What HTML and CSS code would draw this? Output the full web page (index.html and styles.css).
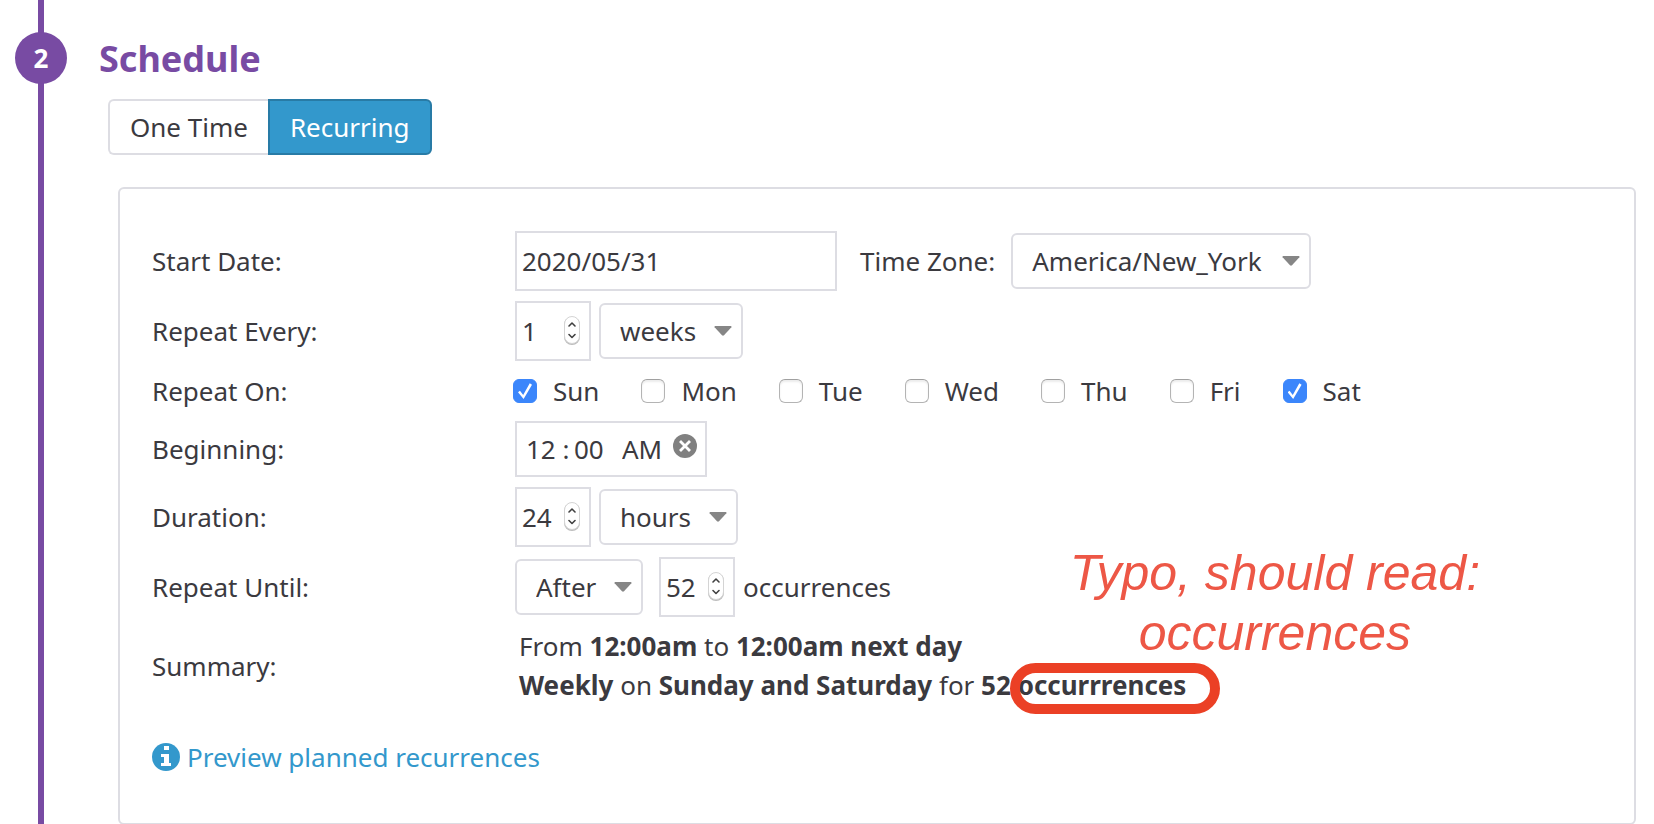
FILE: index.html
```html
<!DOCTYPE html>
<html lang="en">
<head>
<meta charset="utf-8">
<title>Schedule</title>
<meta name="viewport" content="width=device-width, initial-scale=1">
<link rel="stylesheet" href="styles.css">
</head>
<body>
<svg class="symbols" aria-hidden="true">
  <symbol id="arrow" viewBox="0 0 18 10"><path d="M1.2 0h15.6q1 .2.6 1.200L10 9.300q-1 .9-2 0L.6 1.200Q.2.2 1.200 0z" fill="#868686"/></symbol>
  <symbol id="stepper" viewBox="0 0 18 32">
    <rect x="1" y="2" width="16" height="28" rx="8" fill="#bdbdbd"/>
    <rect x="1.500" y="1.500" width="15" height="27" rx="7.500" fill="#fff" stroke="#d4d4d4"/>
    <path d="M6 11 9 8l3 3M6 19.500 9 22.500l3-3" fill="none" stroke="#404040" stroke-width="1.600" stroke-linecap="round" stroke-linejoin="round"/>
  </symbol>
</svg>
<main class="step">
  <div class="rail"><span class="step-number">2</span></div>
  <section class="content">
    <h2 class="title">Schedule</h2>
    <div class="toggle" role="group" aria-label="Schedule type">
      <button type="button" class="toggle-button">One Time</button>
      <button type="button" class="toggle-button active" aria-pressed="true">Recurring</button>
    </div>
    <form class="panel">
      <div class="row">
        <label class="name" for="start">Start Date:</label>
        <div class="field">
          <input class="box date" id="start" type="text" value="2020/05/31">
          <label class="zone" for="zone">Time Zone:</label>
          <span class="select"><select class="zone-list" id="zone"><option>America/New_York</option></select><svg class="arrow"><use href="#arrow"/></svg></span>
        </div>
      </div>
      <div class="row">
        <label class="name" for="every">Repeat Every:</label>
        <div class="field">
          <span class="number"><input class="box" id="every" type="number" value="1"><svg class="stepper"><use href="#stepper"/></svg></span>
          <span class="select"><select aria-label="Repeat unit"><option>weeks</option></select><svg class="arrow"><use href="#arrow"/></svg></span>
        </div>
      </div>
      <div class="row">
        <span class="name" id="days">Repeat On:</span>
        <div class="days" role="group" aria-labelledby="days">
          <label class="day"><input type="checkbox" checked>Sun</label>
          <label class="day"><input type="checkbox">Mon</label>
          <label class="day"><input type="checkbox">Tue</label>
          <label class="day"><input type="checkbox">Wed</label>
          <label class="day"><input type="checkbox">Thu</label>
          <label class="day"><input type="checkbox">Fri</label>
          <label class="day"><input type="checkbox" checked>Sat</label>
        </div>
      </div>
      <div class="row">
        <label class="name" for="hour">Beginning:</label>
        <div class="field">
          <div class="time">
            <input class="time-part" id="hour" type="text" value="12"><span class="colon">:</span><input class="time-part" type="text" value="00" aria-label="Minutes"><input class="time-part meridiem" type="text" value="AM" aria-label="AM or PM">
            <button type="button" class="clear" aria-label="Clear time"><svg viewBox="0 0 24 24"><circle cx="12" cy="12" r="12" fill="#808080"/><path d="M8 8l8 8M16 8l-8 8" stroke="#fff" stroke-width="2.800" stroke-linecap="square"/></svg></button>
          </div>
        </div>
      </div>
      <div class="row">
        <label class="name" for="duration">Duration:</label>
        <div class="field">
          <span class="number"><input class="box" id="duration" type="number" value="24"><svg class="stepper"><use href="#stepper"/></svg></span>
          <span class="select"><select aria-label="Duration unit"><option>hours</option></select><svg class="arrow"><use href="#arrow"/></svg></span>
        </div>
      </div>
      <div class="row">
        <label class="name" for="until">Repeat Until:</label>
        <div class="field">
          <span class="select until"><select id="until"><option>After</option></select><svg class="arrow"><use href="#arrow"/></svg></span>
          <span class="number"><input class="box" id="count" type="number" value="52"><svg class="stepper"><use href="#stepper"/></svg></span>
          <label for="count">occurrences</label>
        </div>
      </div>
      <div class="row">
        <span class="name">Summary:</span>
        <div class="summary">
          <div>From <b>12:00am</b> to <b>12:00am next day</b></div>
          <div><b>Weekly</b> on <b>Sunday and Saturday</b> for <b>52 <span class="marked">occurrrences<span class="ring"></span><span class="note">Typo, should read:<br>occurrences</span></span></b></div>
        </div>
      </div>
      <a class="preview" href="#"><svg class="info" viewBox="0 0 28 28"><circle cx="14" cy="14" r="14" fill="#3398cc"/><path d="M12 3h5v4h-5zM9 11h8v9h2v3H9v-3h3v-6H9z" fill="#fff"/></svg>Preview planned recurrences</a>
    </form>
  </section>
</main>
</body>
</html>
```
FILE: styles.css
```css
* { box-sizing: border-box; }
body {
  margin: 0;
  background: #fff;
  color: #3b3a3f;
  font: 26px/40px "Noto Sans", "Open Sans", sans-serif;
}
input, select, button { font: inherit; color: inherit; margin: 0; }
.symbols { position: absolute; width: 0; height: 0; }
.step { display: flex; min-height: 100vh; }
.rail {
  flex: none;
  width: 52px;
  margin-left: 15px;
  padding-top: 32px;
  background: linear-gradient(#784ba3, #784ba3) center / 6px 100% no-repeat;
}
.step-number {
  display: block;
  border-radius: 50%;
  background: #784ba3;
  color: #fff;
  font-weight: 700;
  line-height: 52px;
  text-align: center;
}
.content { flex: 1; min-width: 0; padding: 33px 18px 0 32px; }
.title { margin: 0 0 14px; color: #784ba3; font-size: 36px; line-height: 52px; font-weight: 700; }
.toggle { display: flex; margin-left: 9px; }
.toggle-button {
  height: 56px;
  padding: 0 20px;
  border: 2px solid #dddde3;
  border-right: 0;
  border-radius: 6px 0 0 6px;
  background: #fff;
}
.toggle-button.active { border: 2px solid #287ba6; border-radius: 0 6px 6px 0; background: #3398cc; color: #fff; }
.panel {
  display: flex;
  flex-direction: column;
  gap: 10px;
  margin: 32px 0 0 19px;
  padding: 42px 32px 46px;
  border: 2px solid #dddde3;
  border-radius: 6px;
}
.row { display: flex; align-items: center; }
.name { flex: none; width: 363px; }
.field { display: flex; align-items: center; gap: 8px; }
.box {
  height: 60px;
  padding: 0 5px;
  border: 2px solid #dddde3;
  border-radius: 0;
  background: #fff;
}
.date { width: 322px; }
.zone { margin: 0 8px 0 15px; }
.number, .select { position: relative; display: flex; }
.number .box { width: 76px; appearance: textfield; }
.number .box::-webkit-inner-spin-button { display: none; }
.stepper { position: absolute; right: 10px; top: 14px; width: 18px; height: 32px; pointer-events: none; }
.select select {
  appearance: none;
  height: 56px;
  padding: 0 44px 0 19px;
  border: 2px solid #dddde3;
  border-radius: 6px;
  background: #fff;
}
.select .zone-list { min-width: 300px; }
.arrow { position: absolute; right: 11px; top: 23px; width: 18px; height: 10px; pointer-events: none; }
.until { margin-right: 8px; }
.days { display: flex; gap: 42px; margin-left: -2px; }
.day { display: flex; align-items: center; gap: 16px; }
.day input {
  appearance: none;
  display: grid;
  place-items: center;
  width: 24px;
  height: 24px;
  border: 1px solid #b4b4b4;
  border-top-color: #a0a0a0;
  border-radius: 6px;
  background: #fff;
  box-shadow: inset 0 2px 2px #ededed;
}
.day input:checked { border-color: #3b86fb; background: #3b86fb; box-shadow: none; }
.day input:checked::before {
  content: "";
  width: 14px;
  height: 16px;
  background: #fff;
  clip-path: polygon(0 58%, 14% 48%, 37% 75%, 84% 2%, 100% 11%, 40% 100%);
}
.time { display: flex; align-items: center; height: 56px; padding: 0 8px 0 9px; border: 2px solid #dddde3; }
.time-part { width: 32px; padding: 0; border: 0; background: none; }
.colon { width: 16px; text-align: center; }
.meridiem { width: 42px; margin-left: 16px; }
.clear { display: flex; width: 24px; height: 24px; margin: 0 0 6px 9px; padding: 0; border: 0; background: none; }
.clear svg { width: 24px; height: 24px; }
.summary { padding-left: 4px; line-height: 39px; }
.marked { position: relative; white-space: nowrap; }
.ring {
  position: absolute;
  left: -8px;
  right: -34px;
  top: -4px;
  height: 51px;
  border: 10px solid #eb4025;
  border-radius: 26px;
}
.note {
  position: absolute;
  left: 52px;
  bottom: 40px;
  color: #ed5746;
  font: italic 50px/60px "Liberation Sans", Arial, sans-serif;
  text-align: center;
}
.preview { display: flex; align-items: center; gap: 7px; margin-top: 22px; color: #3398cc; text-decoration: none; }
.info { width: 28px; height: 28px; }
```
